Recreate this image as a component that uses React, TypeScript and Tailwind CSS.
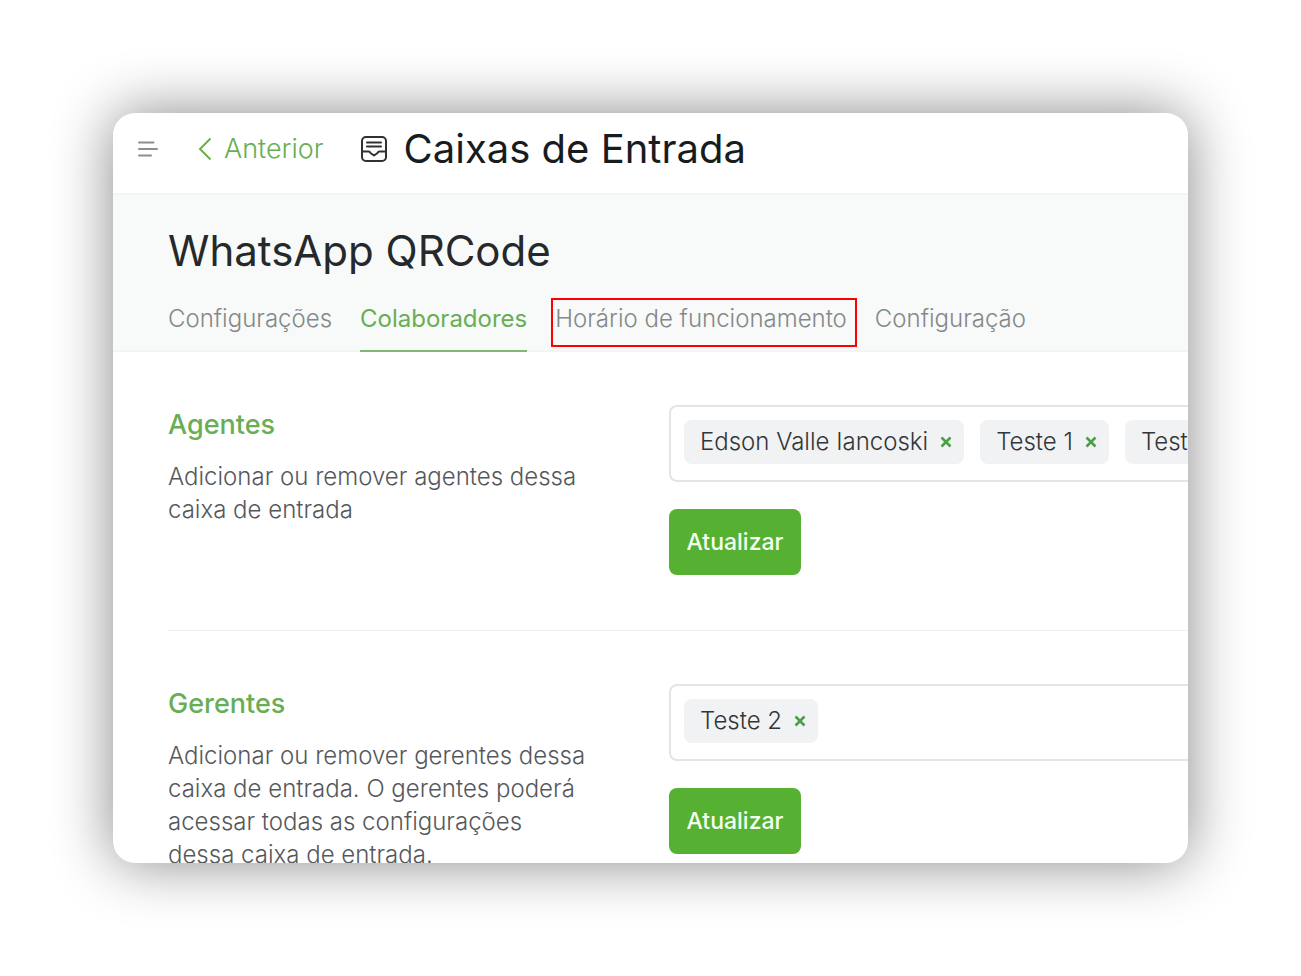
import React, { useState } from 'react';

const ABAS = ['Configurações', 'Colaboradores', 'Horário de funcionamento', 'Configuração'];

function IconeMenu() {
    return (
        <svg width="21" height="18" viewBox="0 0 21 18" fill="none" stroke="#8c8f8e" strokeWidth="2" strokeLinecap="round">
            <path d="M2 2.500h14.500M2 9h18M2 15.500h12" />
        </svg>
    );
}

function IconeVoltar() {
    return (
        <svg width="14" height="24" viewBox="0 0 14 24" fill="none" stroke="#68b04c" strokeWidth="2">
            <path d="M12.500 1.500 2 12l10.500 10.500" />
        </svg>
    );
}

function IconeCaixa() {
    return (
        <svg width="28" height="28" viewBox="0 0 28 28" fill="none" stroke="#2e3234" strokeWidth="2" strokeLinecap="round" strokeLinejoin="round">
            <rect x="2" y="2" width="24" height="24" rx="4" />
            <path d="M7 7.500h14M7 11.500h14M2 16.500h6.500c1.500 0 1.700.8 2.300 1.800L14 20.500l3.200-2.200c.6-1 .8-1.800 2.300-1.800H26" />
        </svg>
    );
}

function Etiqueta({ nome, onRemove }: { nome: string; onRemove: () => void }) {
    return (
        <li className="flex h-11 shrink-0 items-center gap-3 rounded-lg bg-[#f1f2f3] pl-4 pr-3 text-2xl font-light text-[#333638]">
            {nome}
            <button type="button" aria-label={`Remover ${nome}`} onClick={onRemove}>
                <svg width="12" height="12" viewBox="0 0 12 12" fill="none" stroke="#4a9e45" strokeWidth="2.500">
                    <path d="m1.500 1.500 9 9m0-9-9 9" />
                </svg>
            </button>
        </li>
    );
}

interface GrupoProps {
    titulo: string;
    descricao: string;
    iniciais: string[];
}

function Grupo({ titulo, descricao, iniciais }: GrupoProps) {
    const [nomes, setNomes] = useState(iniciais);

    return (
        <section className="flex min-h-[279px] border-b border-[#eff1f0] pt-[53px]">
            <div className="w-[501px] shrink-0 pr-20">
                <h2 className="text-[27px] leading-10 font-medium text-[#68ae55]">{titulo}</h2>
                <p className="mt-[15px] text-2xl leading-[33px] font-light text-[#55585b]">{descricao}</p>
            </div>
            <form className="-mr-4 min-w-0 flex-1" onSubmit={(e) => e.preventDefault()}>
                <ul className="flex h-[77px] items-center gap-4 rounded-lg border-2 border-[#e3e4e5] px-[13px] pb-1">
                    {nomes.map((nome) => (
                        <Etiqueta key={nome} nome={nome} onRemove={() => setNomes(nomes.filter((n) => n !== nome))} />
                    ))}
                </ul>
                <button type="submit" className="mt-[27px] h-[66px] w-[132px] rounded-lg bg-[#56b032] text-[23px] font-medium text-[#f3fff0]">
                    Atualizar
                </button>
            </form>
        </section>
    );
}

function App() {
    const [aba, setAba] = useState('Colaboradores');

    return (
        <div className="h-screen bg-white p-[113px] font-['Inter',sans-serif]">
            <div className="h-full overflow-hidden rounded-[22px] bg-white shadow-[0_0_60px_rgba(0,0,0,0.47)]">
                <header className="flex h-20 items-center pb-2 pl-6">
                    <button type="button" aria-label="Menu" className="mr-10">
                        <IconeMenu />
                    </button>
                    <a href="#" className="mr-9 flex items-center gap-3 text-[27px] font-light text-[#68ae55]">
                        <IconeVoltar />
                        Anterior
                    </a>
                    <IconeCaixa />
                    <h1 className="ml-4 text-[40px] leading-none whitespace-nowrap text-[#191c1e]">Caixas de Entrada</h1>
                </header>

                <div className="border-y-2 border-[#f2f5f4] bg-[#f7faf9] pt-8 pl-[55px]">
                    <h2 className="text-[42px] leading-[48px] whitespace-nowrap text-[#26292b]">WhatsApp QRCode</h2>
                    <nav className="-mb-0.5 mt-4 flex gap-7">
                        {ABAS.map((nome) => (
                            <button
                                key={nome}
                                type="button"
                                onClick={() => setAba(nome)}
                                className={`relative h-[61px] shrink-0 border-b-2 pb-1 text-2xl whitespace-nowrap ${
                                    nome === aba
                                        ? 'border-[#7fb873] font-normal text-[#68ae55]'
                                        : 'border-transparent font-light text-[#858888]'
                                }`}
                            >
                                {nome}
                                {nome === 'Horário de funcionamento' && (
                                    <span className="absolute top-[7px] -right-2.5 -left-1 h-[49px] border-2 border-[#ff0000]" />
                                )}
                            </button>
                        ))}
                    </nav>
                </div>

                <main className="pl-[55px]">
                    <Grupo
                        titulo="Agentes"
                        descricao="Adicionar ou remover agentes dessa caixa de entrada"
                        iniciais={['Edson Valle Iancoski', 'Teste 1', 'Teste 3']}
                    />
                    <Grupo
                        titulo="Gerentes"
                        descricao="Adicionar ou remover gerentes dessa caixa de entrada. O gerentes poderá acessar todas as configurações dessa caixa de entrada."
                        iniciais={['Teste 2']}
                    />
                </main>
            </div>
        </div>
    );
}

export default App;
